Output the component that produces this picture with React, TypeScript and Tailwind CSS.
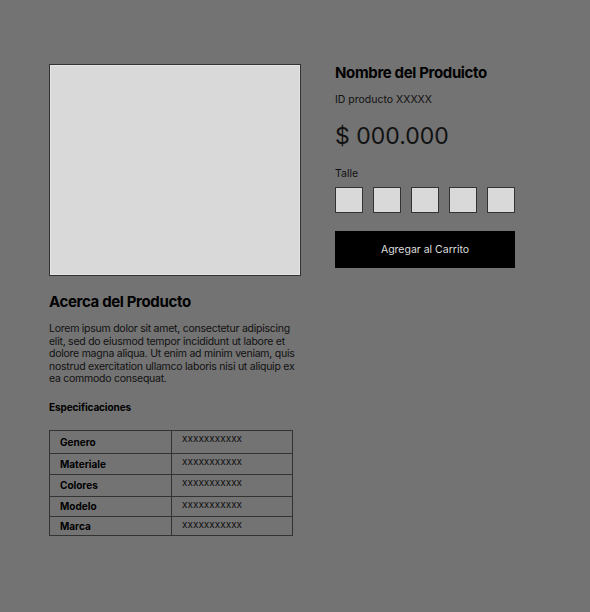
const specs = [
  { label: "Genero", h: "h-[22px]" },
  { label: "Materiale", h: "h-[21px]" },
  { label: "Colores", h: "h-[22px]" },
  { label: "Modelo", h: "h-[20px]" },
  { label: "Marca", h: "h-[19px]" },
];

export default function App() {
  return (
    <div className="min-h-[612px] w-[590px] bg-[#737373] font-['Inter',sans-serif] text-black">
      <div className="flex gap-[34px] pl-[49px] pt-[64px]">
        <div className="flex w-[252px] flex-col">
          <div className="h-[212px] w-[252px] border border-[#333] bg-[#d9d9d9] shadow-[inset_0_0_0_1px_#e4e4e4]" />
          <h2 className="mt-[16px] text-[15px] font-bold leading-[20px] tracking-[-0.35px]">Acerca del Producto</h2>
          <p className="mt-[11px] text-[10.5px] leading-[12.5px] tracking-[-0.25px] text-[#111]">
            Lorem ipsum dolor sit amet, consectetur adipiscing elit, sed do eiusmod tempor incididunt ut labore et
            dolore magna aliqua. Ut enim ad minim veniam, quis nostrud exercitation ullamco laboris nisi ut aliquip ex
            ea commodo consequat.
          </p>
          <h3 className="mt-[14px] text-[10px] font-bold leading-[14px] tracking-[-0.1px]">Especificaciones</h3>
          <div className="mt-[16px] w-[244px] border border-[#333]">
            {specs.map((s, i) => (
              <div key={s.label} className={`flex ${s.h} ${i > 0 ? "border-t border-[#333]" : ""}`}>
                <div className="flex w-[122px] items-center border-r border-[#333] pl-[10px] text-[10px] font-bold leading-[14px]">
                  {s.label}
                </div>
                <div className="pl-[10px] pt-[2px] text-[10px] leading-[11px] text-[#111]">xxxxxxxxxxx</div>
              </div>
            ))}
          </div>
        </div>
        <div className="flex w-[180px] flex-col">
          <h1 className="text-[15px] font-bold leading-[18px] tracking-[-0.35px]">Nombre del Produicto</h1>
          <div className="mt-[11px] text-[10.5px] leading-[14px] text-[#111]">ID producto XXXXX</div>
          <div className="mt-[14px] text-[23px] leading-[30px] text-[#111]">$ 000.000</div>
          <div className="mt-[16px] text-[10.5px] leading-[14px] text-[#111]">Talle</div>
          <div className="mt-[6px] flex gap-[10px]">
            {[0, 1, 2, 3, 4].map((n) => (
              <div key={n} className="h-[26px] w-[28px] border border-[#333] bg-[#d9d9d9]" />
            ))}
          </div>
          <button className="mt-[18px] h-[37px] w-[180px] bg-black text-[10.5px] text-[#ddd]">Agregar al Carrito</button>
        </div>
      </div>
    </div>
  );
}
